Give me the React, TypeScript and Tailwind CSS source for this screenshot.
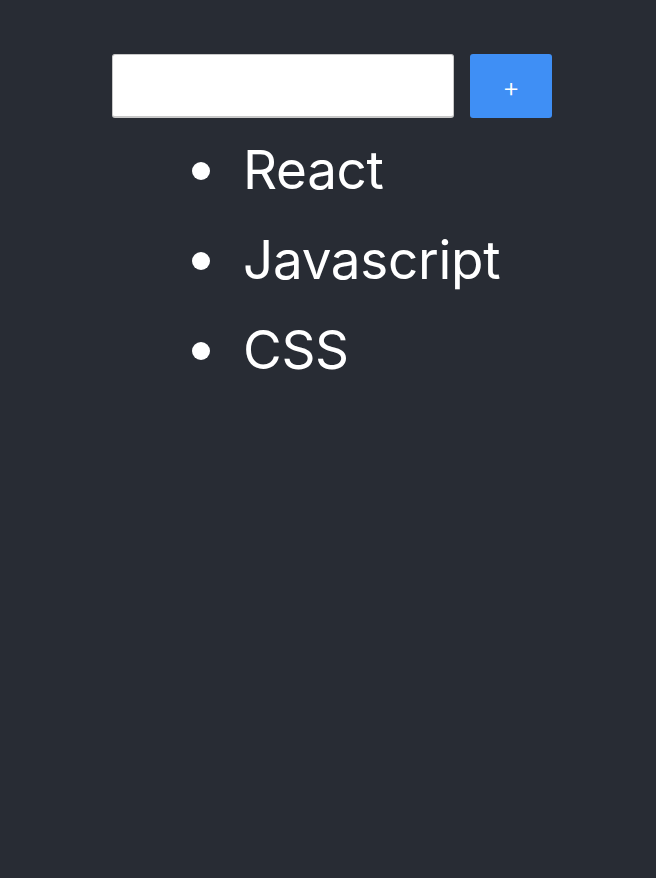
import React from "react";

export default function App() {
  const items = ["React", "Javascript", "CSS"];
  return (
    <div className="min-h-[878px] w-full bg-[#282c34] font-['Inter',sans-serif] text-white">
      <div className="flex pl-[112px] pt-[54px]">
        <input
          type="text"
          className="h-[64px] w-[342px] rounded-[3px] border border-b-2 border-[#c8c8c8] bg-white px-2 text-black outline-none"
        />
        <button className="ml-[16px] flex h-[64px] w-[82px] items-center justify-center rounded-[3px] bg-[#3f8ff5] pt-[3px] text-[27px] font-light leading-none text-white">
          +
        </button>
      </div>
      <ul className="mt-[7px] pl-[192px] text-[53px] leading-[90px] tracking-[-0.3px]">
        {items.map((it) => (
          <li key={it} className="flex items-center">
            <span className="mr-[33px] mt-[2px] h-[18px] w-[18px] rounded-full bg-white" />
            <span>{it}</span>
          </li>
        ))}
      </ul>
    </div>
  );
}
